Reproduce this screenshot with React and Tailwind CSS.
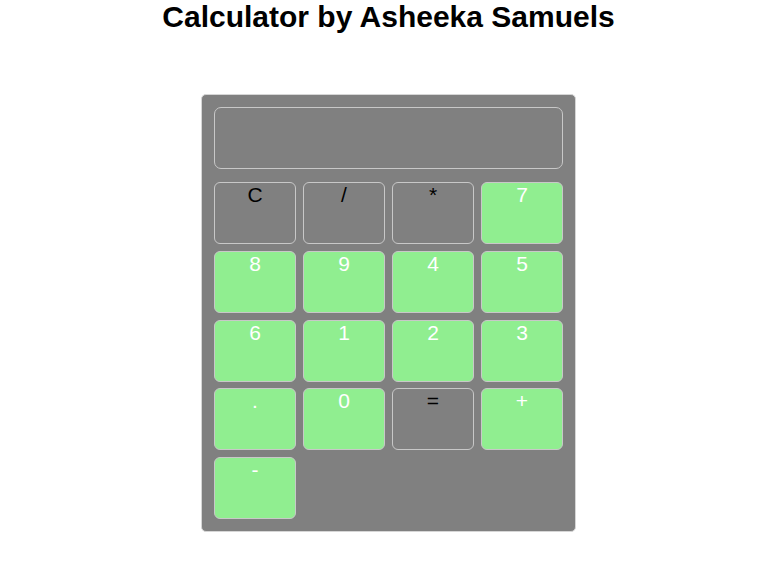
import React from 'react';

const keys = [
    { label: 'C', op: true },
    { label: '/', op: true },
    { label: '*', op: true },
    { label: '7' },
    { label: '8' },
    { label: '9' },
    { label: '4' },
    { label: '5' },
    { label: '6' },
    { label: '1' },
    { label: '2' },
    { label: '3' },
    { label: '.' },
    { label: '0' },
    { label: '=', op: true },
    { label: '+' },
    { label: '-' },
];

const App = () => {
    return (
        <div className="min-h-[562px] bg-white font-['Liberation_Sans',Arial,sans-serif] pl-[20px]">
            <h1 className="text-center text-[30px] font-bold leading-[normal] text-black m-0">
                Calculator by Asheeka Samuels
            </h1>

            <div className="flex justify-center mt-[60px]">
                <div className="w-[375px] bg-[#808080] border border-[#d6d6d6] rounded-[5px] p-[12px]">
                    {/* Display */}
                    <div className="h-[62px] rounded-[7px] border border-[#c8c8c8] mb-[13px]"></div>

                    {/* Keys */}
                    <div className="grid grid-cols-4 gap-x-[7px] gap-y-[6.75px]">
                        {keys.map((k) => (
                            <button
                                key={k.label}
                                className={
                                    k.op
                                        ? 'h-[62px] rounded-[6px] border border-[#c8c8c8] bg-[#808080] text-black text-[21px] leading-[normal] flex justify-center items-start pt-0'
                                        : 'h-[62px] rounded-[6px] border border-[#c8c8c8] bg-[#90ee90] text-white text-[21px] leading-[normal] flex justify-center items-start pt-0'
                                }
                            >
                                {k.label}
                            </button>
                        ))}
                    </div>
                </div>
            </div>
        </div>
    );
};

export default App;
